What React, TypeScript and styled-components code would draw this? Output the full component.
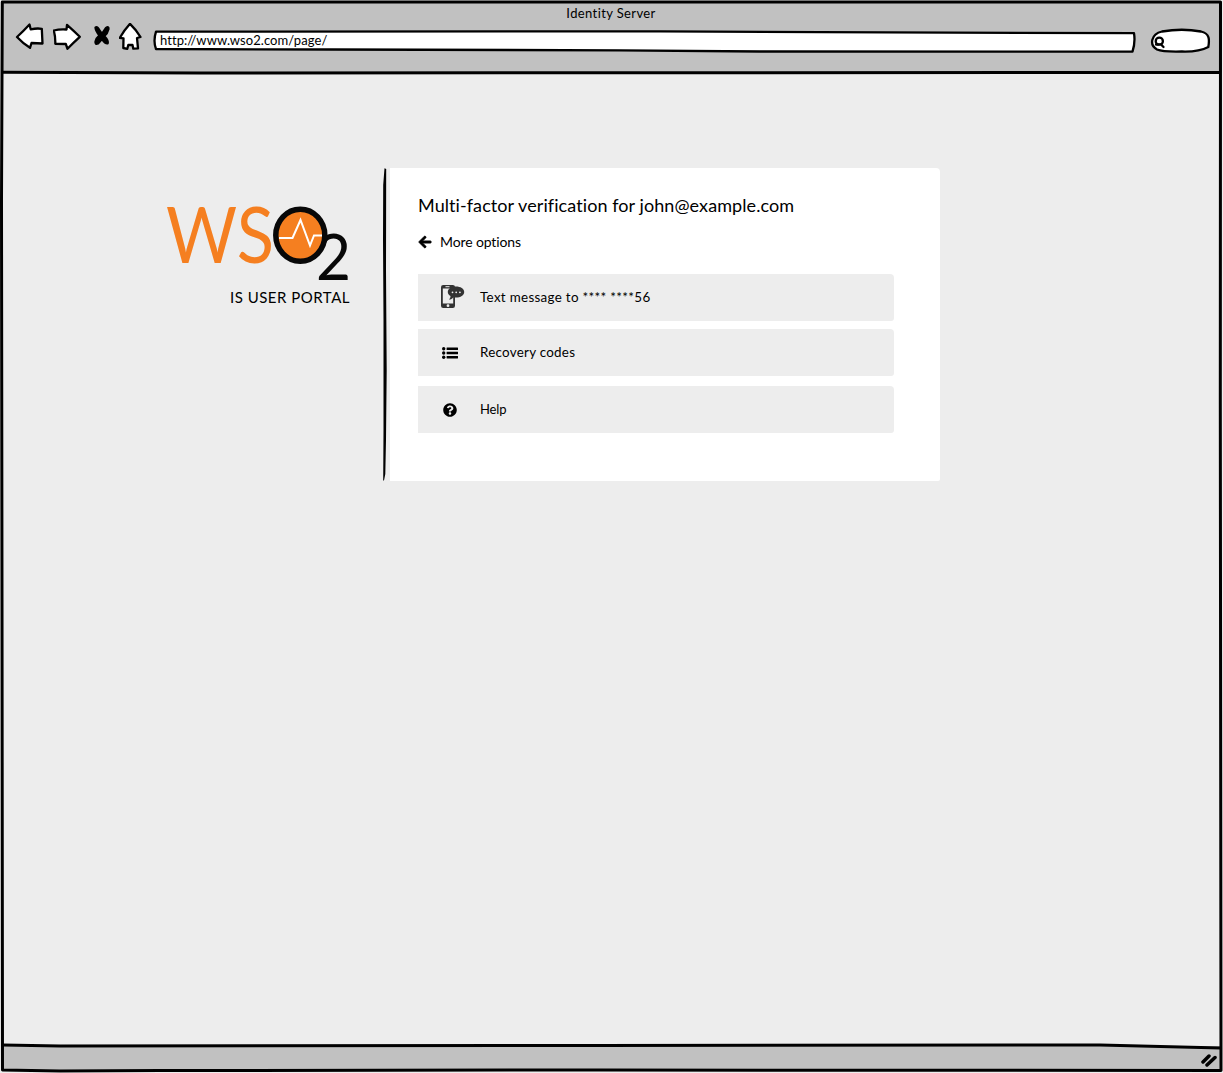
import React from "react";
import styled, { createGlobalStyle } from "styled-components";
import { FaArrowLeft, FaQuestionCircle } from "react-icons/fa";

const GlobalStyle = createGlobalStyle`
  *, *::before, *::after { box-sizing: border-box; }
  body { margin: 0; background: #ededed; }
`;

const BrowserWindow = styled.div`
  position: relative;
  display: flex;
  flex-direction: column;
  width: 1223px;
  height: 1073px;
  padding: 1px 1px 2px 2px;
  overflow: hidden;
  background: #ededed;
  color: #000;
  font-family: Lato, "Liberation Sans", sans-serif;
  font-variant-ligatures: none;
`;

const WindowOutline = styled.svg`
  position: absolute;
  inset: 0;
  pointer-events: none;
  fill: none;
  stroke: #000;
  stroke-width: 3;
  stroke-linejoin: round;
`;

const Text = styled.span<{ $size: number; $tracking?: number }>`
  font-size: ${(p) => p.$size}px;
  letter-spacing: ${(p) => p.$tracking ?? 0}px;
  line-height: 20px;
  white-space: nowrap;
`;

const Chrome = styled.header`
  flex: none;
  height: 71px;
  background: #c1c1c1;
`;

const TitleBar = styled.div`
  display: flex;
  justify-content: center;
  height: 21px;
  padding: 2px 2px 0 0;
`;

const NavBar = styled.div`
  display: flex;
  align-items: flex-start;
  padding-left: 13px;
`;

const NavIcon = styled.svg<{ $gap: number }>`
  flex: none;
  margin: 1px ${(p) => p.$gap}px 0 0;
  fill: #fff;
  stroke: #000;
  stroke-width: 2.3;
  stroke-linejoin: round;
  stroke-linecap: round;
`;

const AddressBar = styled.div`
  position: relative;
  display: flex;
  width: 984px;
  height: 24px;
  margin: 7px 13px 0 0;
  padding: 1px 0 0 7px;
`;

const AddressOutline = styled.svg`
  position: absolute;
  inset: 0;
  fill: #fff;
  stroke: #000;
  stroke-width: 2.3;
  stroke-linejoin: round;
`;

const AddressText = styled(Text)`
  position: relative;
`;

const SearchField = styled.svg`
  flex: none;
  margin-top: 5px;
  fill: #fff;
  stroke: #000;
  stroke-width: 2.3;
  stroke-linecap: round;
`;

const Page = styled.main`
  flex: 1;
  display: flex;
  align-items: flex-start;
  padding: 96px 0 0 164px;
`;

const Brand = styled.div`
  display: flex;
  flex-direction: column;
  align-items: flex-end;
  width: 184px;
  padding-top: 32px;
  margin-right: 33px;
`;

const Logo = styled.svg`
  display: block;
  overflow: visible;
`;

const Rule = styled.svg`
  flex: none;
  margin-right: 2px;
  fill: #000;
`;

const Card = styled.section`
  width: 550px;
  height: 313px;
  padding: 27px 46px 0 28px;
  background: #fff;
  border-radius: 0 4px 2px 0;
`;

const Heading = styled.h1`
  display: flex;
  margin: 0;
  font-weight: 400;
`;

const BackLink = styled.div`
  display: flex;
  align-items: center;
  gap: 8px;
  margin: 17px 0 22px;
`;

const BackArrow = styled(FaArrowLeft)`
  stroke: #000;
  stroke-width: 30px;
`;

const Options = styled.div`
  display: flex;
  flex-direction: column;
`;

const Option = styled.div<{ $before?: number }>`
  display: grid;
  grid-template-columns: 62px auto;
  align-items: center;
  height: 47px;
  margin-top: ${(p) => p.$before ?? 0}px;
  padding-bottom: 1px;
  background: #ededed;
  border-radius: 0 4px 3px 0;
`;

const IconCell = styled.div<{ $left: number; $top?: number }>`
  display: flex;
  padding: ${(p) => p.$top ?? 0}px 0 0 ${(p) => p.$left}px;
`;

const StatusBar = styled.footer`
  flex: none;
  display: flex;
  justify-content: flex-end;
  height: 25px;
  padding: 7px 4px 0 0;
  background: #c1c1c1;
`;

function BrandLogo() {
  return (
    <Logo width="184" height="87" viewBox="166 200 184 87">
      <text x="166" y="262.500" fontSize="77.500" textLength="108" lengthAdjust="spacingAndGlyphs" fill="#f57f20">WS</text>
      <text x="316" y="279.500" fontSize="64" textLength="35" lengthAdjust="spacingAndGlyphs" fill="#080808">2</text>
      <ellipse cx="300.300" cy="235.300" rx="24.500" ry="26" fill="#f57f20" stroke="#080808" strokeWidth="5.500" />
      <path d="M279 238h13.500l8-18 9.500 25.500 4-10h8" fill="none" stroke="#fff" strokeWidth="2" />
    </Logo>
  );
}

function PhoneMessageIcon() {
  return (
    <svg width="24" height="24" viewBox="441 285 24 24">
      <rect x="441" y="285" width="14" height="23" rx="2.200" fill="#333" />
      <rect x="442.800" y="288.500" width="10.400" height="15" fill="#ededed" />
      <path d="M445.500 286.700h4" stroke="#ededed" strokeWidth="1" />
      <circle cx="448" cy="305.700" r="1.400" fill="#ededed" />
      <path d="M456 286.500c4.500 0 8.200 2.200 8.200 5.400s-3.700 5.600-8.200 5.600c-1 0-1.900-.1-2.700-.3-.8 1.300-2.500 2.300-4.300 2.400.9-.9 1.500-2 1.500-3.500-1.700-1-2.700-2.500-2.700-4.200 0-3.200 3.700-5.400 8.200-5.400z" fill="#333" />
      <g fill="#ededed"><circle cx="452.500" cy="292.300" r=".9" /><circle cx="456.200" cy="292.300" r=".9" /><circle cx="459.900" cy="292.300" r=".9" /></g>
    </svg>
  );
}

function ListIcon() {
  return (
    <svg width="16" height="12" viewBox="0 0 16 12">
      <circle cx="1.700" cy="1.700" r="1.700" /><circle cx="1.700" cy="6" r="1.700" /><circle cx="1.700" cy="10.300" r="1.700" />
      <rect x="4.600" y=".6" width="11.400" height="2.400" rx=".3" /><rect x="4.600" y="4.800" width="11.400" height="2.400" rx=".3" /><rect x="4.600" y="9" width="11.400" height="2.400" rx=".3" />
    </svg>
  );
}

export default function App() {
  return (
    <>
      <GlobalStyle />
      <BrowserWindow>
        <Chrome>
          <TitleBar><Text $size={13} $tracking={0.38}>Identity Server</Text></TitleBar>
          <NavBar>
            <NavIcon $gap={8} width="30" height="28" viewBox="15 23.500 30 28">
              <path d="M17 37.500Q23 32 29.500 25L30.700 29.800Q37 28.500 41.800 29.300L42.500 44L31.500 43.500L30 48.300Q23 44 17 37.500Z" />
            </NavIcon>
            <NavIcon $gap={10} width="30" height="28" viewBox="53.500 23.500 30 28">
              <path d="M54.300 31Q60 29.500 67 30L67.500 25.300Q74 31 80.300 37.300Q74 43 68 49.300L66.300 44.500L55.800 44.300Q56 37 54.300 31Z" />
            </NavIcon>
            <NavIcon $gap={8} width="18" height="28" viewBox="93 23.500 18 28">
              <path fill="#000" d="M95.500 28Q97.500 27 99.500 31L102 34.500L106 28.500Q108.800 26.500 108.500 29.500Q107.500 34 104.200 36.500Q108.500 41 107.700 43.800Q105.500 44.500 102 39.500L98 44Q95 45 95.500 42Q96.500 38.500 99.500 36Q95.500 31 95.500 28Z" />
            </NavIcon>
            <NavIcon $gap={10} width="24" height="28" viewBox="119 23.500 24 28">
              <path d="M130 24.300Q136 30 140.500 37.500L137 38.500L138 48.800L133.300 49.200L132.500 45.500L128.300 45.500L127.300 49.300L123.300 48.500L123.500 38.800L119.800 38.300Q124 31 130 24.300Z" />
            </NavIcon>
            <AddressBar>
              <AddressOutline width="984" height="24" viewBox="153 29 984 24">
                <path d="M156 31.700L660 31.300L820 32.200L1134 33.200Q1135.500 42 1132.500 51.700L760 51.500L620 50.300L330 49.500L156 49Q153 41 156 31.700Z" />
              </AddressOutline>
              <AddressText $size={13} $tracking={0.07}>http://www.wso2.com/page/</AddressText>
            </AddressBar>
            <SearchField width="62" height="28" viewBox="1150 27 62 28">
              <path d="M1162 31.500Q1182 28 1201 31.500C1210 33.500 1209.500 40 1208.300 47Q1199 52 1182 51.500Q1163 52 1157 49.500C1149 45 1151 34 1162 31.500Z" />
              <circle cx="1159.300" cy="41.200" r="3.600" /><path d="M1156 44.500h5l2.500 2.500" />
            </SearchField>
          </NavBar>
        </Chrome>
        <Page>
          <Brand>
            <BrandLogo />
            <Text $size={15} $tracking={0.5}>IS USER PORTAL</Text>
          </Brand>
          <Rule width="5" height="313" viewBox="383 168 5 313">
            <path d="M384.500 168.300L386.200 169L386 270L386.700 370L386 440L385.300 474L384 480.500H383.200L383.500 430L383.500 320L383 240L383.200 185Z" />
          </Rule>
          <Card>
            <Heading><Text $size={18} $tracking={0.08}>Multi-factor verification for john@example.com</Text></Heading>
            <BackLink><BackArrow size={14} /><Text $size={14} $tracking={-0.12}>More options</Text></BackLink>
            <Options>
              <Option><IconCell $left={23}><PhoneMessageIcon /></IconCell><Text $size={13.4} $tracking={0.31}>Text message to **** ****56</Text></Option>
              <Option $before={8}><IconCell $left={24} $top={2}><ListIcon /></IconCell><Text $size={13.4} $tracking={0.26}>Recovery codes</Text></Option>
              <Option $before={10}><IconCell $left={25} $top={1}><FaQuestionCircle size={14} /></IconCell><Text $size={13} $tracking={-0.15}>Help</Text></Option>
            </Options>
          </Card>
        </Page>
        <StatusBar>
          <svg width="18" height="14" viewBox="1200 1053 18 14" stroke="#000" strokeWidth="3.500" strokeLinecap="round"><path d="M1203 1062L1209 1056M1207 1065L1215 1057.500" /></svg>
        </StatusBar>
        <WindowOutline width="1223" height="1073" viewBox="0 0 1223 1073">
          <path d="M2.300 2L1220.500 2L1220.300 400L1221 1070.500L600 1070L160 1070.500L60 1071L2.500 1070L2 600L1.500 200Z" />
          <path d="M3 72.300L200 73L500 72.700L1220 72.500" />
          <path d="M3 1045L60 1046L600 1045.500L1100 1045L1221 1048" />
        </WindowOutline>
      </BrowserWindow>
    </>
  );
}
